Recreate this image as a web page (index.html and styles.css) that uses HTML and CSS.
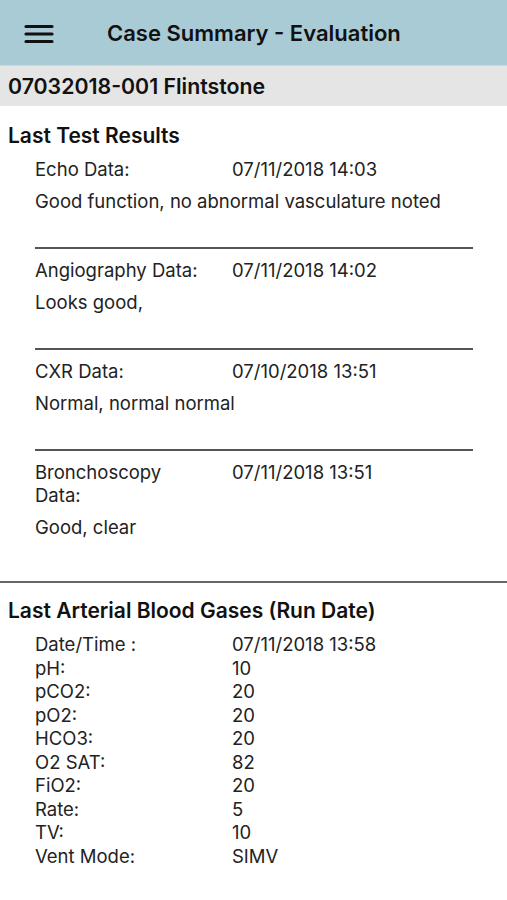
FILE: index.html
```html
<!DOCTYPE html>
<html lang="en">
<head>
<meta charset="utf-8">
<title>Case Summary - Evaluation</title>
<link rel="stylesheet" href="styles.css">
</head>
<body>
<header class="topbar">
  <button class="menu" aria-label="Menu">
    <svg width="30" height="20" viewBox="0 0 30 20"><path d="M2 2.5H28M2 10H28M2 17.5H28" stroke="#111" stroke-width="3.2" stroke-linecap="round" fill="none"/></svg>
  </button>
  <h1 class="title">Case Summary - Evaluation</h1>
</header>
<div class="case">07032018-001 Flintstone</div>

<section class="tests">
  <h2 class="section-title">Last Test Results</h2>
  <div class="entry">
    <div class="entry-head"><span class="label">Echo Data:</span><span class="date">07/11/2018 14:03</span></div>
    <div class="desc">Good function, no abnormal vasculature noted</div>
  </div>
  <div class="entry">
    <div class="entry-head"><span class="label">Angiography Data:</span><span class="date">07/11/2018 14:02</span></div>
    <div class="desc">Looks good,</div>
  </div>
  <div class="entry">
    <div class="entry-head"><span class="label">CXR Data:</span><span class="date">07/10/2018 13:51</span></div>
    <div class="desc">Normal, normal normal</div>
  </div>
  <div class="entry last">
    <div class="entry-head"><span class="label">Bronchoscopy Data:</span><span class="date">07/11/2018 13:51</span></div>
    <div class="desc">Good, clear</div>
  </div>
</section>

<section class="abg">
  <h2 class="section-title">Last Arterial Blood Gases (Run Date)</h2>
  <div class="grid">
    <span>Date/Time :</span><span>07/11/2018 13:58</span>
    <span>pH:</span><span>10</span>
    <span>pCO2:</span><span>20</span>
    <span>pO2:</span><span>20</span>
    <span>HCO3:</span><span>20</span>
    <span>O2 SAT:</span><span>82</span>
    <span>FiO2:</span><span>20</span>
    <span>Rate:</span><span>5</span>
    <span>TV:</span><span>10</span>
    <span>Vent Mode:</span><span>SIMV</span>
  </div>
</section>
</body>
</html>
```
FILE: styles.css
```css
* { box-sizing: border-box; }
html, body { margin: 0; padding: 0; background: #fff; }
body {
  font-family: Inter, "Liberation Sans", Arial, sans-serif;
  color: #222;
  width: 507px;
}
.topbar {
  height: 65px;
  background: #a9cbd5;
  display: flex;
  align-items: center;
  padding-left: 24px;
}
.menu {
  border: 0;
  background: none;
  padding: 0;
  width: 30px;
  height: 20px;
  display: flex;
  margin-top: 2px;
}
.title {
  margin: 0 0 0 53px;
  font-size: 22px;
  font-weight: 600;
  color: #111;
}
.case {
  height: 41px;
  background: #e5e5e5;
  border-top: 1px solid #d4d4d4;
  display: flex;
  align-items: center;
  padding-left: 8px;
  font-size: 21.3px;
  font-weight: 600;
  color: #111;
}
.section-title {
  margin: 0;
  padding-left: 8px;
  font-size: 21px;
  line-height: 24px;
  font-weight: 600;
  color: #111;
}
.tests { padding-top: 18px; }
.entry {
  margin-left: 35px;
  width: 438px;
  padding: 10px 0 34px;
  border-bottom: 2px solid #555;
  font-size: 18.5px;
  line-height: 23px;
}
.entry.last {
  border-bottom: 0;
  padding-bottom: 42px;
}
.entry-head {
  display: grid;
  grid-template-columns: 168px 1fr;
  column-gap: 29px;
}
.desc { margin-top: 9px; }
.abg {
  border-top: 2px solid #666;
  padding-top: 16px;
}
.grid {
  margin: 10px 0 0 35px;
  display: grid;
  grid-template-columns: 197px 1fr;
  font-size: 18.5px;
  line-height: 23.5px;
}
```
